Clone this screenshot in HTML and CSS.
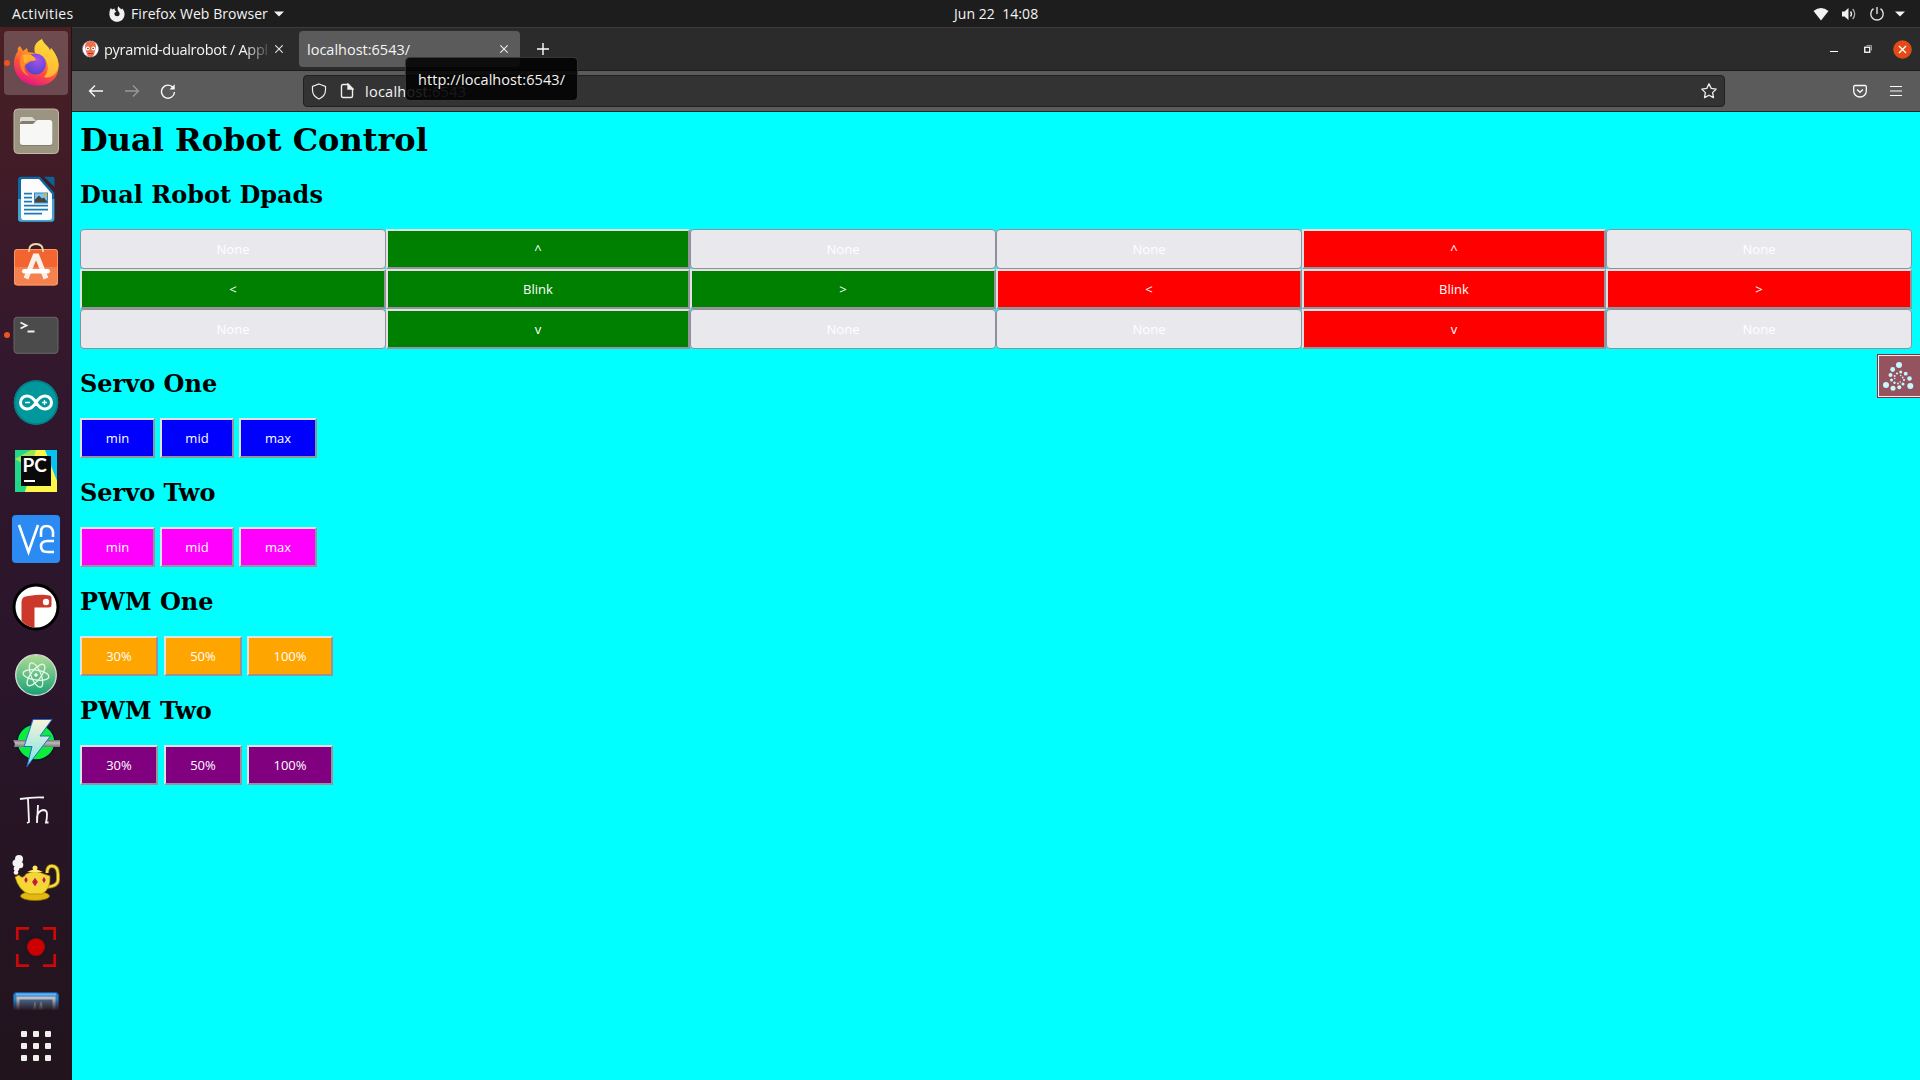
FILE: index.html
```html
<!DOCTYPE html>
<html lang="en">
<head>
<meta charset="utf-8">
<title>Dual Robot Control</title>
<link rel="stylesheet" href="styles.css">
</head>
<body>
<header class="topbar">
  <div class="top-left">
    <span class="t-act">Activities</span>
    <svg class="fx-mono" width="16" height="16" viewBox="0 0 16 16"><path d="M2 2l1 1.600L5.500 2.500 6 4.500 7.500 5.500 5.500 6.700C5 9 6.500 10.300 8.200 10.300 11 10.200 11.300 7 9.500 5.500 8.300 4 8.300 1.800 9.500.3 10 2 11.500 2.500 12.700 3.500l.3-1.300C15 4.300 15.800 6.500 15.500 9 15 13 12 15.800 8 15.800S.6 12.800.4 8.500C.3 6 .8 3.600 2 2z" fill="#f0f0f0"/></svg>
    <span class="t-app">Firefox Web Browser</span>
    <svg width="10" height="6" viewBox="0 0 10 6"><path d="M0 .5h10L5 5.500z" fill="#f2f2f2"/></svg>
  </div>
  <div class="clock">Jun 22&nbsp; 14:08</div>
  <div class="top-right">
    <svg width="16" height="16" viewBox="0 0 16 16"><path d="M8 14.500L.5 5Q8-1 15.500 5z" fill="#f2f2f2"/></svg>
    <svg width="16" height="16" viewBox="0 0 16 16"><path d="M1 5.500h2.500L7.500 2v12L3.500 10.500H1z" fill="#f2f2f2"/><path d="M9.500 5.500q2 2.500 0 5" fill="none" stroke="#f2f2f2" stroke-width="1.300"/><path d="M11.700 3q4 5 0 10" fill="none" stroke="#aaa" stroke-width="1.300"/></svg>
    <svg width="16" height="16" viewBox="0 0 16 16" fill="none" stroke="#e2e2e2" stroke-width="1.400"><path d="M4.500 2.700A6.200 6.200 0 1 0 11.500 2.700M8 1v7"/></svg>
    <svg class="caret" width="10" height="6" viewBox="0 0 10 6"><path d="M0 .5h10L5 5.500z" fill="#f2f2f2"/></svg>
  </div>
</header>
<div class="main">
<nav class="dock">
  <div class="slots">
  <svg class="slot active" viewBox="0 0 64 64">
    <defs>
      <linearGradient id="fx" x1=".8" y1="0" x2=".35" y2="1"><stop offset="0" stop-color="#fff44f"/><stop offset=".35" stop-color="#ffa224"/><stop offset=".65" stop-color="#ff5338"/><stop offset="1" stop-color="#e31587"/></linearGradient>
      <radialGradient id="fxp" cx=".6" cy=".3" r=".8"><stop offset="0" stop-color="#a650f0"/><stop offset="1" stop-color="#4a45c8"/></radialGradient>
    </defs>
    <path d="M14 20C13 18 14 16 16 15l3 5 4-3 1 4 7 1C29 15 32 11 38 8c1 4 5 6 7 9l1 3 1-3c10 12 9 23 4 30C46 53 40 54.500 33 54.500 20 54.500 10 45 10 33c0-5 1-9 4-13z" fill="url(#fx)"/>
    <path d="M31 22c-1-6 2-11 7-14 1 5 7 8 8 12l1-3c5 6 8 12 7.500 18C53 44 46 48 40 46c5-5 5-14 0-19z" fill="#ffd63a" opacity=".75"/>
    <circle cx="31.500" cy="33" r="10.500" fill="url(#fxp)"/>
    <path d="M17 24c4-3 9-2 14 3 2 1 2 3-2 3-4 0-5 3-8 4-2 5 1 9 5 11-8-1-12-10-9-21z" fill="#ff8a25"/>
    <path d="M19 24c5-2 9 0 12 3 1 2-1 2.500-4 2.500s-4 2-7 2.500z" fill="#ffb02e"/>
  </svg>
  <svg class="slot" viewBox="0 0 64 64"><rect x="10" y="10" width="44.500" height="44.500" rx="4" fill="#9b9480" stroke="#c0b9a8"/><path d="M16 20q0-2 2-2h9q2 0 3 2l2 2v8H16z" fill="#dedad0"/><rect x="16" y="22" width="32.300" height="25" rx="2.500" fill="#857d6c"/><path d="M16 25h12q2 0 3-2t3-2h12q2.300 0 2.300 2.500v20q0 2.500-2.500 2.500h-27Q16 46 16 43.500z" fill="#f7f7f6"/></svg>
  <svg class="slot" viewBox="0 0 64 64"><path d="M17 9.700h19l14.300 16V52q0 2.700-3 2.700H17q-3 0-3-3V13q0-3.300 3-3.300z" fill="#0d69a3"/><path d="M14 32h36.300v20q0 2.700-3 2.700H17q-3 0-3-3z" fill="#44a4d4"/><path d="M40 9.700h8.500q2 0 2 2V20z" fill="#0f6195"/><path d="M18 12h17l13 15v23q0 3-2.500 3h-26Q17 53 17 50V13z" fill="#fcfcfc"/><path d="M20 26.700h8M20 30.700h8M20 34.700h8M20 38.700h24M20 42.700h24M20 46.700h18" stroke="#1a7bb5" stroke-width="1.800"/><rect x="30" y="25.500" width="14" height="11" fill="#278bc4"/><rect x="31" y="26.500" width="12" height="9" fill="#82c4e8"/><path d="M31 35.500v-3l4-4 3 3 2-1 3 4v1z" fill="#444"/><path d="M39 26.500h4v4z" fill="#f5b212"/></svg>
  <svg class="slot" viewBox="0 0 64 64"><rect x="10" y="14" width="44" height="36.500" rx="3" fill="#f26531"/><path d="M10 32h44v15q0 3-3 3H13q-3 0-3-3z" fill="#f5814f"/><rect x="10.500" y="14.500" width="43" height="35.500" rx="3" fill="none" stroke="#f99a6b"/><path d="M25 17v-1q0-7 7-7t7 7v1" fill="none" stroke="#efdcae" stroke-width="1.800"/><path d="M22 43.500L31 21h2l9 22.500" fill="none" stroke="#f8f0e8" stroke-width="5"/><rect x="18" y="34" width="28" height="4.500" rx="2.200" fill="#fff"/></svg>
  <svg class="slot" viewBox="0 0 64 64"><rect x="10" y="14.300" width="44" height="36" rx="3" fill="#4b4b4b" stroke="#676767"/><path d="M16.500 19.500l6 3-6 3M23.500 28.500h7" fill="none" stroke="#f2f2f2" stroke-width="1.800"/></svg>
  <svg class="slot" viewBox="0 0 64 64"><circle cx="32" cy="31.500" r="22.200" fill="#00979d"/><circle cx="32" cy="31.500" r="21.500" fill="none" stroke="#087b80" stroke-width="1.500"/><path d="M32 31.500c-3-5-6-6.500-9-6.500a6.500 6.500 0 0 0 0 13c3 0 6-1.500 9-6.500s6-6.500 9-6.500a6.500 6.500 0 0 1 0 13c-3 0-6-1.500-9-6.500z" fill="none" stroke="#fff" stroke-width="3"/><path d="M21 31.500h5M38 31.500h5M40.500 29v5" stroke="#fff" stroke-width="1.300"/></svg>
  <svg class="slot" viewBox="0 0 64 64"><rect x="11" y="11" width="42" height="42" fill="#21d789"/><path d="M31 11h22v30L38 11z" fill="#07c3f2"/><path d="M11 20l16-9h11l15 31v11H21l12-20z" fill="#9be652"/><path d="M32 11h9l12 31v11H21z" fill="#fcf84a"/><path d="M11 47l8-2 2 8H11z" fill="#21d789"/><path d="M45 11h8v22z" fill="#07c3f2"/><rect x="17" y="17" width="30" height="30" fill="#090909"/><text x="18.500" y="33" class="pc">PC</text><path d="M20 42h11" stroke="#fff" stroke-width="2"/></svg>
  <svg class="slot" viewBox="0 0 64 64"><rect x="8" y="8" width="48" height="48" rx="4" fill="#2b8bf2"/><path d="M15 18l9.500 27L34 18M37 30v-5q0-6 5.500-6t6.500 6v5M50 34h-6.500q-6.500 0-6.500 5.500t6.500 5.500H50" fill="none" stroke="#fff" stroke-width="2.600"/></svg>
  <svg class="slot" viewBox="0 0 64 64"><circle cx="32" cy="32" r="22" fill="#fff" stroke="#000" stroke-width="3"/><path d="M17.500 46V27q0-6 7-6 13-2 21-.5 2 0 2 2.500v7q0 2.500-3 2.500H30.500V52.500q-7 0-13-6.500z" fill="#cc392b"/><circle cx="42" cy="27" r="3.200" fill="#fff"/></svg>
  <svg class="slot" viewBox="0 0 64 64"><defs><linearGradient id="at" x1="0" y1="0" x2="0" y2="1"><stop offset="0" stop-color="#b0dc96"/><stop offset="1" stop-color="#16a274"/></linearGradient></defs><circle cx="32" cy="32" r="20.300" fill="url(#at)" stroke="#ddd" stroke-width="1.300"/><g fill="none" stroke="#e4f7e7" stroke-width="1.300"><ellipse cx="32" cy="32" rx="13" ry="5" transform="rotate(8 32 32)"/><ellipse cx="32" cy="32" rx="13" ry="5" transform="rotate(68 32 32)"/><ellipse cx="32" cy="32" rx="13" ry="5" transform="rotate(128 32 32)"/></g><circle cx="32" cy="32" r="1.700" fill="#fff"/></svg>
  <svg class="slot" viewBox="0 0 64 64"><defs><linearGradient id="bo" x1="0" y1="0" x2="0" y2="1"><stop offset="0" stop-color="#f8f3d8"/><stop offset="1" stop-color="#74e6e4"/></linearGradient><linearGradient id="ba" x1="0" y1="0" x2="0" y2="1"><stop offset="0" stop-color="#707070"/><stop offset=".4" stop-color="#bbb"/><stop offset="1" stop-color="#777"/></linearGradient></defs><ellipse cx="32" cy="31" rx="19" ry="18" fill="#0dec3d" stroke="#07162e" stroke-width="1.500"/><path d="M9 29h47v7H10l1-3z" fill="url(#ba)"/><path d="M29 8.500h19L36 25h10.500L23 55.500l5-20h-8z" fill="url(#bo)" stroke="#2468d2"/></svg>
  <svg class="slot" viewBox="0 0 64 64"><path d="M16 20q12-2 24-1.500M24 20l1 23-2 1M34 26l-1 18v-6q1-6 6-7 4 0 4 4 0 5-1 8.500h2.500" fill="none" stroke="#f5f5f5" stroke-width="1.800"/></svg>
  <svg class="slot" viewBox="0 0 64 64"><g fill="#f3f3f3"><circle cx="15" cy="12" r="4"/><circle cx="12" cy="16" r="3.500"/><circle cx="16" cy="18" r="3.300"/><circle cx="12.500" cy="21.500" r="2.800"/><circle cx="12" cy="25.500" r="2.300"/></g><path d="M43 26q0-7 5-7 6 0 6 9v5q0 6-11 7" fill="none" stroke="#927500" stroke-width="4"/><path d="M43 26q0-7 5-7 6 0 6 9v5q0 6-11 7" fill="none" stroke="#f4dc4b" stroke-width="2.300"/><ellipse cx="31" cy="49" rx="14.500" ry="4.500" fill="#e3b810" stroke="#8c6d00" stroke-width=".7"/><path d="M11 30l4-2q4 5 7-1 9-5 18 0l6 2q1 13-8 18H25Q15 44 11 30z" fill="#f4d731" stroke="#a88000" stroke-width=".7"/><path d="M23 25q8-5 16 0z" fill="#ffec7b"/><circle cx="31" cy="21" r="2.500" fill="#ffe65e"/><g fill="#c51c27" stroke="#fff2a2" stroke-width=".6"><path d="M31 30l3.300 5-3.300 5-3.300-5zM22 29l2.200 4-2.200 4-2.200-4zM40 29l2.200 4-2.200 4-2.200-4z"/></g></svg>
  <svg class="slot" viewBox="0 0 64 64"><circle cx="32" cy="32" r="12.500" fill="#211421"/><circle cx="32" cy="32" r="8.800" fill="#cc0000"/><path d="M25 13.300H13.300V25M39 13.300h11.700V25M25 50.700H13.300V39M39 50.700h11.700V39" fill="none" stroke="#cc0808" stroke-width="2.800"/></svg>
  <svg class="slot" viewBox="0 0 64 64"><defs><linearGradient id="fd" x1="0" y1="0" x2="0" y2="1"><stop offset=".4" stop-color="#25141f" stop-opacity="0"/><stop offset="1" stop-color="#25141f" stop-opacity=".95"/></linearGradient></defs><rect x="9.500" y="9.500" width="45" height="45" rx="3" fill="#2d82cc" stroke="#165ba0"/><path d="M12 11.500h40" stroke="#68b3f1" stroke-width="2"/><rect x="14" y="15" width="36" height="35" fill="#4c6c8d" stroke="#bcbcc4" stroke-width="3"/><path d="M28 28l3-10 2 10zM34 28l3-10 3 10z" fill="#c6beb8"/><rect x="8" y="8" width="48" height="19" fill="url(#fd)"/></svg>
  </div>
  <svg class="apps" width="72" height="70" viewBox="0 1010 72 70" fill="#f0efec"><g id="row"><rect x="21" y="1031" width="6" height="6" rx="1"/><rect x="33" y="1031" width="6" height="6" rx="1"/><rect x="45" y="1031" width="6" height="6" rx="1"/></g><use href="#row" y="12"/><use href="#row" y="24"/></svg>
  <i class="dot dot-a"></i><i class="dot dot-b"></i>
</nav>
<div class="browser">
  <div class="tabs">
    <div class="tab tab-one">
      <svg width="17" height="18" viewBox="0 0 17 18"><circle cx="8.500" cy="9" r="8" fill="#fff" stroke="#9a91c4" stroke-dasharray="2 1"/><path d="M3 7q0-6 5.500-6T14 7l-1 4q-1 6-4.500 6T4 11z" fill="#ef7048"/><circle cx="5.700" cy="8.500" r="2" fill="#fff"/><circle cx="11.300" cy="8.500" r="2" fill="#fff"/><circle cx="5.900" cy="8.500" r=".8" fill="#333"/><circle cx="11.100" cy="8.500" r=".8" fill="#333"/><path d="M6 13.500h5" stroke="#a33"/></svg>
      <span class="title-one">pyramid-dualrobot / Appl</span>
      <svg width="8" height="8" viewBox="0 0 8 8" stroke="#e5e5e5" stroke-width="1.100"><path d="M.3.3l7.400 7.400M7.700.3L.3 7.700"/></svg>
    </div>
    <div class="tab tab-two"><span class="title-two">localhost:6543/</span>
      <svg width="8" height="8" viewBox="0 0 8 8" stroke="#eee" stroke-width="1.100"><path d="M.3.3l7.400 7.400M7.700.3L.3 7.700"/></svg>
    </div>
    <svg class="plus" width="12" height="12" viewBox="0 0 12 12" stroke="#fff" stroke-width="1.400"><path d="M6 0v12M0 6h12"/></svg>
    <div class="win">
      <svg width="9" height="10" viewBox="0 0 9 10"><path d="M0 7.500h8" stroke="#fff"/></svg>
      <svg width="9" height="10" viewBox="0 0 9 10" fill="none"><path d="M2.500 1.500h5v5" stroke="#999"/><rect x=".75" y="3.250" width="5" height="5" stroke="#fff" stroke-width="1.300"/></svg>
      <svg width="19" height="19" viewBox="0 0 19 19"><circle cx="9.500" cy="9.500" r="9.300" fill="#e24a17"/><path d="M6 6l7 7M13 6l-7 7" stroke="#fff" stroke-width="1.400"/></svg>
    </div>
  </div>
  <div class="toolbar">
    <div class="navs">
      <svg width="16" height="16" viewBox="0 0 16 16" fill="none" stroke="#fafafa" stroke-width="1.300"><path d="M15 8H1.500M7 2.500L1.500 8 7 13.500"/></svg>
      <svg width="16" height="16" viewBox="0 0 16 16" fill="none" stroke="#999" stroke-width="1.300"><path d="M1 8h13.500M9 2.500L14.500 8 9 13.500"/></svg>
      <svg width="16" height="16" viewBox="0 0 16 16" fill="none" stroke="#fafafa" stroke-width="1.400"><path d="M13 4.500A6.500 6.500 0 1 0 14.500 9"/><path d="M14.700 1.300v5.200H9.500z" fill="#fafafa" stroke="none"/></svg>
    </div>
    <div class="url">
      <svg width="16" height="17" viewBox="0 0 16 17" fill="none" stroke="#eee" stroke-width="1.200"><path d="M8 1l6.500 2.500v3.700c0 3.500-2.500 6.800-6.500 8.800-4-2-6.500-5.300-6.500-8.800V3.500z"/></svg>
      <svg width="14" height="16" viewBox="0 0 14 16" fill="none" stroke="#eee" stroke-width="1.400"><path d="M3 1.500h5l4.500 4.500v7q0 1.500-1.500 1.500H3q-1.500 0-1.500-1.500V3q0-1.500 1.500-1.500z"/><path d="M8 1v5h5z" fill="#eee"/></svg>
      <span class="addr">localhost<span class="port">:6543</span></span>
      <svg class="star" width="16" height="16" viewBox="0 0 16 16" fill="none" stroke="#eee" stroke-width="1.300" stroke-linejoin="round"><path d="M8 .8l2.200 4.600 5 .7-3.600 3.500.9 5-4.500-2.400-4.500 2.400.9-5L.8 6.100l5-.7z"/></svg>
    </div>
    <div class="tools">
      <svg width="14" height="14" viewBox="0 0 14 14" fill="none" stroke="#fafafa" stroke-width="1.300"><path d="M2 1.500h10q1.300 0 1.300 1.300V7a6.300 6 0 0 1-12.600 0V2.800Q.7 1.500 2 1.500zM4 5.500l3 2.800 3-2.800"/></svg>
      <svg width="12" height="12" viewBox="0 0 12 12" stroke="#fafafa" stroke-width="1.200"><path d="M0 1.500h12M0 6h12M0 10.500h12"/></svg>
    </div>
  </div>
  <main class="page">
    <h1>Dual Robot Control</h1>
    <h2>Dual Robot Dpads</h2>
    <div class="pads">
      <button class="none">None</button><button class="green">^</button><button class="none">None</button><button class="none">None</button><button class="red">^</button><button class="none">None</button>
      <button class="green">&lt;</button><button class="green">Blink</button><button class="green">&gt;</button><button class="red">&lt;</button><button class="red">Blink</button><button class="red">&gt;</button>
      <button class="none">None</button><button class="green">v</button><button class="none">None</button><button class="none">None</button><button class="red">v</button><button class="none">None</button>
    </div>
    <h2>Servo One</h2>
    <div class="servo blue"><button>min</button><button>mid</button><button>max</button></div>
    <h2>Servo Two</h2>
    <div class="servo magenta"><button>min</button><button>mid</button><button>max</button></div>
    <h2>PWM One</h2>
    <div class="pwm orange"><button>30%</button><button>50%</button><button>100%</button></div>
    <h2>PWM Two</h2>
    <div class="pwm purple"><button>30%</button><button>50%</button><button>100%</button></div>
  </main>
</div>
</div>
<div class="tooltip"><span>http://localhost:6543/</span></div>
<svg class="debug" width="43" height="44" viewBox="0 0 43 44"><rect width="43" height="44" fill="#a71e30"/><rect x="1" y="1" width="42" height="42" fill="#e8fbff"/><rect x="2" y="2" width="41" height="40" fill="#95535f"/><g fill="#c5f8ff"><circle cx="22" cy="11" r="3"/><circle cx="15.700" cy="15.500" r="2.400"/><circle cx="13.500" cy="21" r="2"/><circle cx="14.500" cy="26" r="1.500"/><circle cx="17.500" cy="28.700" r="1.200"/><circle cx="9" cy="31" r="3"/><circle cx="16" cy="34.300" r="2.500"/><circle cx="22.300" cy="33.300" r="2"/><circle cx="26" cy="30" r="1.500"/><circle cx="27" cy="26" r="1.100"/><circle cx="33.300" cy="32" r="3"/><circle cx="32.500" cy="24.500" r="2.300"/><circle cx="28.700" cy="19.700" r="1.900"/><circle cx="23.700" cy="18" r="1.500"/><circle cx="20" cy="19.500" r="1.100"/><circle cx="17.700" cy="22" r="1"/><circle cx="17.700" cy="24.500" r=".8"/><circle cx="23.700" cy="21.500" r=".8"/><circle cx="25.700" cy="23.500" r=".9"/><circle cx="21" cy="29.500" r=".9"/><circle cx="23.300" cy="28" r=".8"/></g></svg>
</body>
</html>
```
FILE: styles.css
```css
* { box-sizing: border-box; }
html, body { margin: 0; width: 1920px; height: 1080px; overflow: hidden; }
body { display: flex; flex-direction: column; font-family: "Open Sans", "Noto Sans", sans-serif; font-size: 14.5px; color: #f4f4f4; background: #1d1d1d; }
svg { display: block; flex: none; }
span { white-space: nowrap; }

.topbar { height: 27px; flex: none; display: grid; grid-template-columns: 953px 90px 1fr; align-items: center; background: #1d1d1d; font-size: 14px; }
.top-left { display: flex; align-items: center; padding-left: 12px; }
.t-act { width: 97px; letter-spacing: .4px; }
.t-app { margin: 0 6px 0 6px; width: 137px; letter-spacing: .06px; }
.clock { letter-spacing: .05px; padding-left: 1px; white-space: nowrap; }
.top-right { display: flex; align-items: center; justify-content: flex-end; gap: 12px; padding-right: 15px; }
.caret { margin-left: -2px; }

.main { flex: 1; display: flex; min-height: 0; }
.dock { position: relative; width: 72px; flex: none; border-right: 1px solid #24101c; background: linear-gradient(#4a2023, #3c1a29 20%, #30172e 36%, #2a152a 62%, #21141c); }
.slots { height: 983px; overflow: hidden; display: flex; flex-direction: column; gap: 4px; padding: 4px 0 0 4px; }
.slot { width: 64px; height: 64px; border-radius: 4px; }
.active { background: rgba(255, 255, 255, .2); }
.pc { font: bold 19px Lato, sans-serif; fill: #fff; }
.dot { position: absolute; left: 4px; width: 6px; height: 6px; border-radius: 50%; background: #e95420; }
.dot-a { top: 33px; }
.dot-b { top: 305px; }

.browser { flex: 1; min-width: 0; display: flex; flex-direction: column; }
.tabs { height: 44px; flex: none; display: flex; align-items: center; border-top: 1px solid #3c3c3c; border-bottom: 1px solid #1b1b1b; background: #2b2b2b; }
.tab { height: 36px; display: flex; align-items: center; border-radius: 4px; }
.tab-one { width: 227px; padding-left: 10px; }
.title-one { margin-left: 5px; width: 168px; letter-spacing: -.3px; overflow: hidden; mask-image: linear-gradient(90deg, #000 84%, transparent); }
.tab-one svg:last-child { margin-left: 3px; }
.tab-two { width: 221px; background: #5b5b5b; padding: 0 12px 0 8px; justify-content: space-between; }
.plus { margin-left: 17px; }
.win { margin-left: auto; display: flex; align-items: center; padding-right: 8px; }
.win svg:nth-child(2) { margin-left: 25px; }
.win svg:nth-child(3) { margin-left: 20px; }
.toolbar { height: 41px; flex: none; display: flex; align-items: center; background: #5b5b5b; border-bottom: 1px solid #242424; }
.navs { display: flex; gap: 20px; width: 231px; padding-left: 16px; }
.url { width: 1422px; height: 32px; border: 1px solid #202020; border-radius: 4px; background: #333; display: flex; align-items: center; padding: 0 7px 0 7px; }
.url svg:nth-child(2) { margin-left: 13px; }
.addr { margin-left: 11px; letter-spacing: .25px; }
.port { color: #aaa; }
.star { margin-left: auto; }
.tools { display: flex; align-items: center; gap: 23px; margin-left: auto; padding-right: 18px; }

.page { flex: 1; background: #0ff; padding: 8px; color: #000; }
h1, h2 { font-family: "DejaVu Serif", serif; font-weight: bold; margin: 0; }
h1 { font-size: 32px; line-height: 40px; height: 40px; }
h2 { font-size: 24px; line-height: 28px; height: 28px; margin: 21px 0 20px; }
.pads { display: grid; grid-template-columns: 306px 304px 306px 306px 304px 306px; grid-auto-rows: 40px; }
button { font: 13px "Open Sans", "Noto Sans", sans-serif; color: #fff; padding: 0; height: 40px; border: 2px solid; border-color: #e3e0e3 #96939b #96939b #e3e0e3; border-radius: 0; background: none; }
.none { border: 1px solid #8f8f9d; border-radius: 4px; background: #e9e9ed; }
.green { background: #008000; }
.red { background: #f00; }
.servo, .pwm { display: flex; }
.servo button:nth-child(1) { width: 75px; }
.servo button:nth-child(2) { width: 74px; margin: 0 5px; }
.servo button:nth-child(3) { width: 78px; }
.pwm button { width: 78px; }
.pwm button:nth-child(2) { margin: 0 5px 0 6px; }
.pwm button:nth-child(3) { width: 86px; }
.blue button { background: #00f; }
.magenta button { background: #f0f; }
.orange button { background: #ffa500; }
.purple button { background: #800080; }

.tooltip { position: absolute; left: 405px; top: 57px; width: 173px; height: 44px; border: 1px solid rgba(60, 60, 60, .9); border-radius: 5px; background: rgba(0, 0, 0, .86); display: flex; align-items: center; justify-content: center; letter-spacing: .07px; }
.debug { position: absolute; left: 1877px; top: 354px; }
```
